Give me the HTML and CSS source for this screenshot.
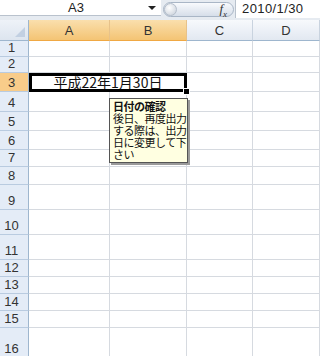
FILE: index.html
```html
<!DOCTYPE html>
<html lang="ja">
<head>
    <meta charset="UTF-8">
    <title>Sheet1</title>
    <link rel="stylesheet" href="styles.css">
</head>
<body>
<div id="app">
    <div class="fbar">
        <div class="namebox">
            <span class="name">A3</span>
            <span class="drop"></span>
        </div>
        <div class="pill">
            <span class="knob"></span>
            <span class="fx">f<sub>x</sub></span>
        </div>
        <div class="formula">2010/1/30</div>
    </div>

    <div class="sheet">
        <div class="corner"><span class="tri"></span></div>
        <div class="colhead on">A</div>
        <div class="colhead on">B</div>
        <div class="colhead">C</div>
        <div class="colhead">D</div>

        <div class="rowhead">1</div><div class="c"></div><div class="c"></div><div class="c"></div><div class="c"></div>
        <div class="rowhead">2</div><div class="c"></div><div class="c"></div><div class="c"></div><div class="c"></div>
        <div class="rowhead on">3</div><div class="c sel">平成22年1月30日<span class="handle"></span></div><div class="c"></div><div class="c"></div>
        <div class="rowhead">4</div><div class="c"></div><div class="c"></div><div class="c"></div><div class="c"></div>
        <div class="rowhead">5</div><div class="c"></div><div class="c"></div><div class="c"></div><div class="c"></div>
        <div class="rowhead">6</div><div class="c"></div><div class="c"></div><div class="c"></div><div class="c"></div>
        <div class="rowhead">7</div><div class="c"></div><div class="c"></div><div class="c"></div><div class="c"></div>
        <div class="rowhead">8</div><div class="c"></div><div class="c"></div><div class="c"></div><div class="c"></div>
        <div class="rowhead">9</div><div class="c"></div><div class="c"></div><div class="c"></div><div class="c"></div>
        <div class="rowhead">10</div><div class="c"></div><div class="c"></div><div class="c"></div><div class="c"></div>
        <div class="rowhead">11</div><div class="c"></div><div class="c"></div><div class="c"></div><div class="c"></div>
        <div class="rowhead">12</div><div class="c"></div><div class="c"></div><div class="c"></div><div class="c"></div>
        <div class="rowhead">13</div><div class="c"></div><div class="c"></div><div class="c"></div><div class="c"></div>
        <div class="rowhead">14</div><div class="c"></div><div class="c"></div><div class="c"></div><div class="c"></div>
        <div class="rowhead">15</div><div class="c"></div><div class="c"></div><div class="c"></div><div class="c"></div>
        <div class="rowhead">16</div><div class="c"></div><div class="c"></div><div class="c"></div><div class="c"></div>
    </div>

    <!--入力時メッセージ-->
    <div class="tip">
        <b>日付の確認</b><br>
        後日、再度出力<br>
        する際は、出力<br>
        日に変更して下<br>
        さい
    </div>
</div>
</body>
</html>
```

FILE: styles.css
```css
*{
    margin: 0;
    padding: 0;
    box-sizing: border-box;
}
body{
    background: #fff;
    font-family: "Liberation Sans", Arial, sans-serif;
    overflow: hidden;
}
#app{
    width: 320px;
    height: 356px;
    position: relative;
    overflow: hidden;
}
/*数式バー*/
.fbar{
    height: 20px;
    display: flex;
    background: #e6ebf1;
}
.namebox{
    width: 161px;
    height: 16px;
    background: #fff;
    border-bottom: 1px solid #b9c2cd;
    display: flex;
    align-items: center;
    font-size: 13px;
    color: #222;
}
.name{
    flex: 1;
    text-align: center;
    padding-left: 4px;
}
.drop{
    width: 0;
    height: 0;
    border-left: 4px solid transparent;
    border-right: 4px solid transparent;
    border-top: 4px solid #222;
    margin-right: 5px;
    margin-top: 1px;
}
.pill{
    width: 71px;
    height: 15px;
    margin-top: 2px;
    margin-left: 2px;
    border: 1px solid #a9b6c6;
    border-radius: 8px;
    background: linear-gradient(#f8fafd, #d6dee9);
    display: flex;
    align-items: center;
    justify-content: space-between;
}
.knob{
    width: 13px;
    height: 13px;
    border-radius: 50%;
    background: radial-gradient(circle at 40% 35%, #fff, #c5cdd8);
    border: 1px solid #b4becb;
}
.fx{
    font-family: "Liberation Serif", serif;
    font-style: italic;
    font-size: 13px;
    color: #333;
    margin-right: 6px;
}
.fx sub{
    font-size: 9px;
}
.formula{
    flex: 1;
    height: 18px;
    background: #fff;
    border-left: 1px solid #b9c2cd;
    margin-left: 1px;
    font-size: 13px;
    letter-spacing: 0.4px;
    color: #222;
    padding-left: 6px;
    line-height: 17px;
}
/*シート*/
.sheet{
    display: grid;
    grid-template-columns: 29px 81px 77px 66px 67px;
    grid-template-rows: 21px 16px 16px 19px 20px 19px 19px 17px 18px 25px 25px 25px 17px 17px 17px 17px 30px;
}
.corner{
    background: linear-gradient(#eef2f8, #dde5ef);
    border-right: 1px solid #9eb6ce;
    border-bottom: 1px solid #9eb6ce;
    position: relative;
}
.tri{
    position: absolute;
    right: 3px;
    bottom: 3px;
    width: 0;
    height: 0;
    border-left: 10px solid transparent;
    border-bottom: 10px solid #c2d0e2;
}
.colhead{
    background: linear-gradient(#f7f9fc, #e2e8f1);
    border-right: 1px solid #c9d3df;
    border-bottom: 1px solid #9eb6ce;
    font-size: 13px;
    color: #333;
    text-align: center;
    line-height: 21px;
}
.colhead.on{
    background: linear-gradient(#fadfad, #f4c474);
    border-right-color: #e7c28a;
    border-bottom-color: #f0a843;
}
.rowhead{
    background: #e4ecf7;
    border-right: 1px solid #9eb6ce;
    border-bottom: 1px solid #b9cbe0;
    font-size: 13px;
    color: #333;
    display: flex;
    align-items: flex-end;
    justify-content: center;
    padding-right: 5px;
    padding-bottom: 1px;
    line-height: 14px;
}
.rowhead.on{
    background: #f8cc8a;
}
.c{
    border-right: 1px solid #d6dae0;
    border-bottom: 1px solid #d6dae0;
}
.c.sel{
    grid-column: span 2;
    position: relative;
    border: none;
    font-family: "Noto Sans CJK JP", sans-serif;
    font-size: 14px;
    color: #111;
    text-align: center;
    line-height: 19px;
}
.c.sel::after{
    content: "";
    position: absolute;
    left: 0;
    top: 0;
    right: 0;
    bottom: 0;
    border: 3px solid #000;
}
.handle{
    position: absolute;
    right: -3px;
    bottom: -3px;
    width: 7px;
    height: 7px;
    background: #000;
    border: 1px solid #fff;
    z-index: 2;
}
/*入力時メッセージ*/
.tip{
    position: absolute;
    left: 109px;
    top: 98px;
    width: 79px;
    height: 65px;
    background: #ffffe1;
    border: 1px solid #555;
    box-shadow: 2px 2px 0 #9a9a9a;
    font-family: "Noto Sans CJK JP", sans-serif;
    font-size: 11px;
    letter-spacing: -0.5px;
    line-height: 12px;
    color: #111;
    padding: 1px 0 0 3px;
    white-space: nowrap;
}
.tip b{
    font-weight: bold;
}
```
